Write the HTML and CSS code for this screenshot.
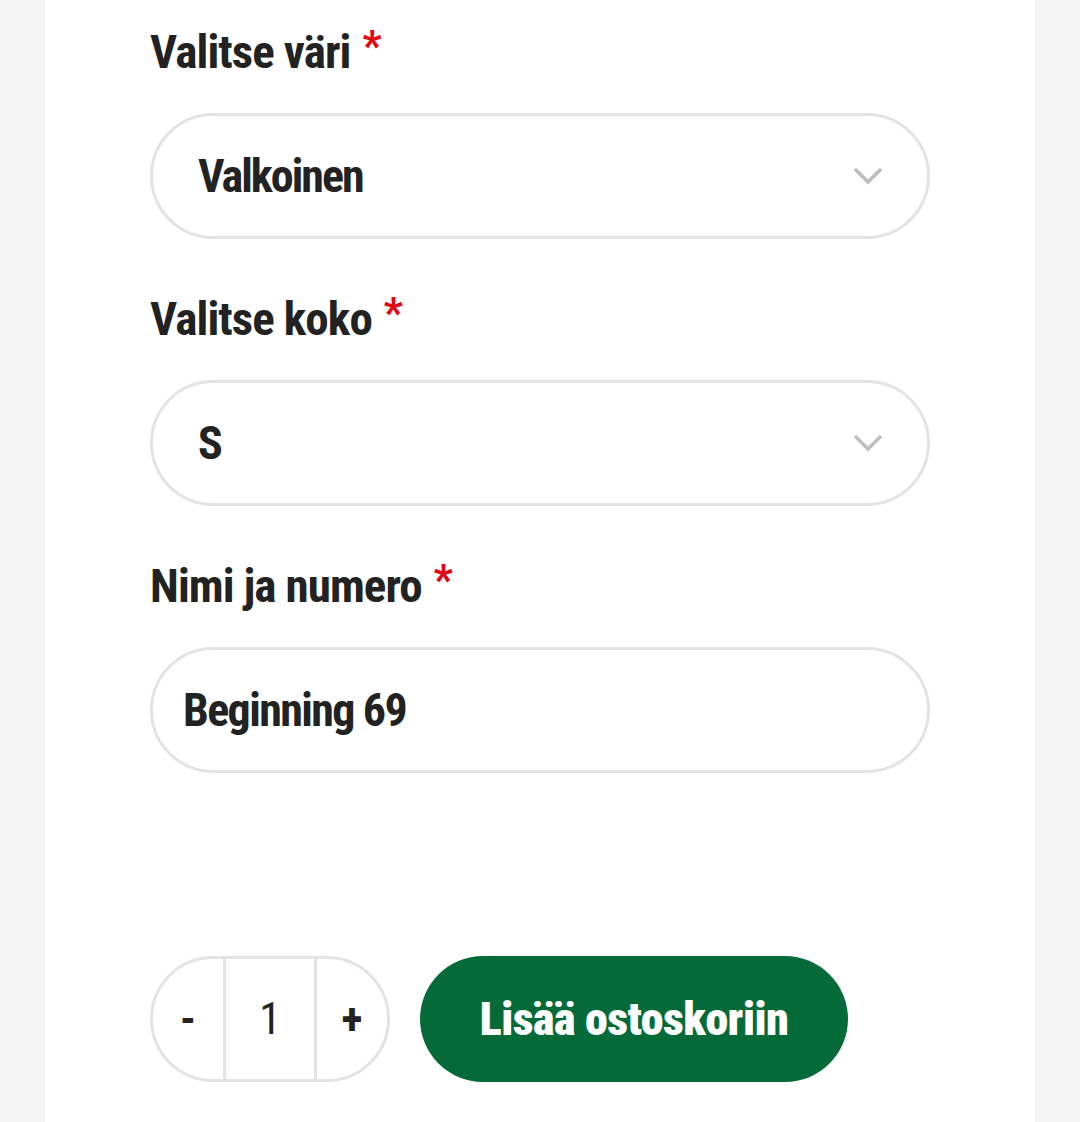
FILE: index.html
```html
<!DOCTYPE html>
<html lang="fi">
<head>
    <meta charset="UTF-8">
    <meta name="viewport" content="width=device-width, initial-scale=1.0">
    <title>Tuote</title>
    <link rel="stylesheet" href="styles.css">
</head>
<body>

    <div class="panel">
        <div class="field">
            <label class="field-label" for="colorSelect">Valitse väri <span class="req">*</span></label>
            <div class="select-box">
                <span class="select-value">Valkoinen</span>
                <svg class="chevron" viewBox="0 0 30 18" width="30" height="18"><path d="M2 2 L15 15 L28 2" fill="none" stroke="#bdbdbd" stroke-width="3.5"/></svg>
            </div>
        </div>

        <div class="field">
            <label class="field-label" for="sizeSelect">Valitse koko <span class="req">*</span></label>
            <div class="select-box">
                <span class="select-value">S</span>
                <svg class="chevron" viewBox="0 0 30 18" width="30" height="18"><path d="M2 2 L15 15 L28 2" fill="none" stroke="#bdbdbd" stroke-width="3.5"/></svg>
            </div>
        </div>

        <div class="field">
            <label class="field-label" for="nameInput">Nimi ja numero <span class="req">*</span></label>
            <div class="text-box">
                <span class="text-value">Beginning 69</span>
            </div>
        </div>

        <div class="cart-row">
            <div class="qty">
                <span class="qty-btn">-</span>
                <span class="qty-num">1</span>
                <span class="qty-btn">+</span>
            </div>
            <button class="add-btn">Lisää ostoskoriin</button>
        </div>
    </div>

</body>
</html>
```

FILE: styles.css
```css
body {
    margin: 0;
    background-color: #f5f5f5;
    font-family: "Roboto Condensed", "Liberation Sans Narrow", "DejaVu Sans Condensed", sans-serif;
    font-stretch: condensed;
    color: #222;
}

.panel {
    margin: 0 45px;
    background-color: #fff;
    min-height: 1122px;
    padding: 24px 105px 0;
}

.field {
    margin-bottom: 52px;
}

.field-label {
    display: block;
    font-size: 47px;
    font-weight: bold;
    line-height: 56px;
    height: 56px;
    margin-bottom: 33px;
    letter-spacing: -0.9px;
}

.req {
    color: #e30613;
    font-size: 42px;
    line-height: 0;
    letter-spacing: 0;
    margin-left: 2px;
    position: relative;
    top: -8px;
}

.select-box, .text-box {
    width: 780px;
    height: 126px;
    box-sizing: border-box;
    border: 3px solid #e3e3e3;
    border-radius: 63px;
    display: flex;
    align-items: center;
    font-size: 46px;
    font-weight: bold;
    letter-spacing: -2px;
}

.select-box {
    padding: 0 44px 0 45px;
    justify-content: space-between;
}

.text-box {
    padding: 0 30px;
    letter-spacing: -1.6px;
}

.chevron {
    display: block;
}

.cart-row {
    display: flex;
    align-items: center;
    gap: 30px;
    margin-top: 183px;
}

.qty {
    display: flex;
    width: 240px;
    height: 126px;
    box-sizing: border-box;
    border: 3px solid #e3e3e3;
    border-radius: 63px;
    font-size: 44px;
    font-weight: bold;
}

.qty-btn {
    width: 70px;
    display: flex;
    align-items: center;
    justify-content: center;
}

.qty-num {
    flex: 1;
    display: flex;
    align-items: center;
    justify-content: center;
    font-weight: normal;
    border-left: 3px solid #e3e3e3;
    border-right: 3px solid #e3e3e3;
}

.add-btn {
    width: 428px;
    height: 126px;
    border: none;
    border-radius: 63px;
    background-color: #046a38;
    color: #fff;
    font-family: inherit;
    font-stretch: condensed;
    font-size: 46px;
    font-weight: 900;
    letter-spacing: -0.5px;
    cursor: pointer;
}
```
